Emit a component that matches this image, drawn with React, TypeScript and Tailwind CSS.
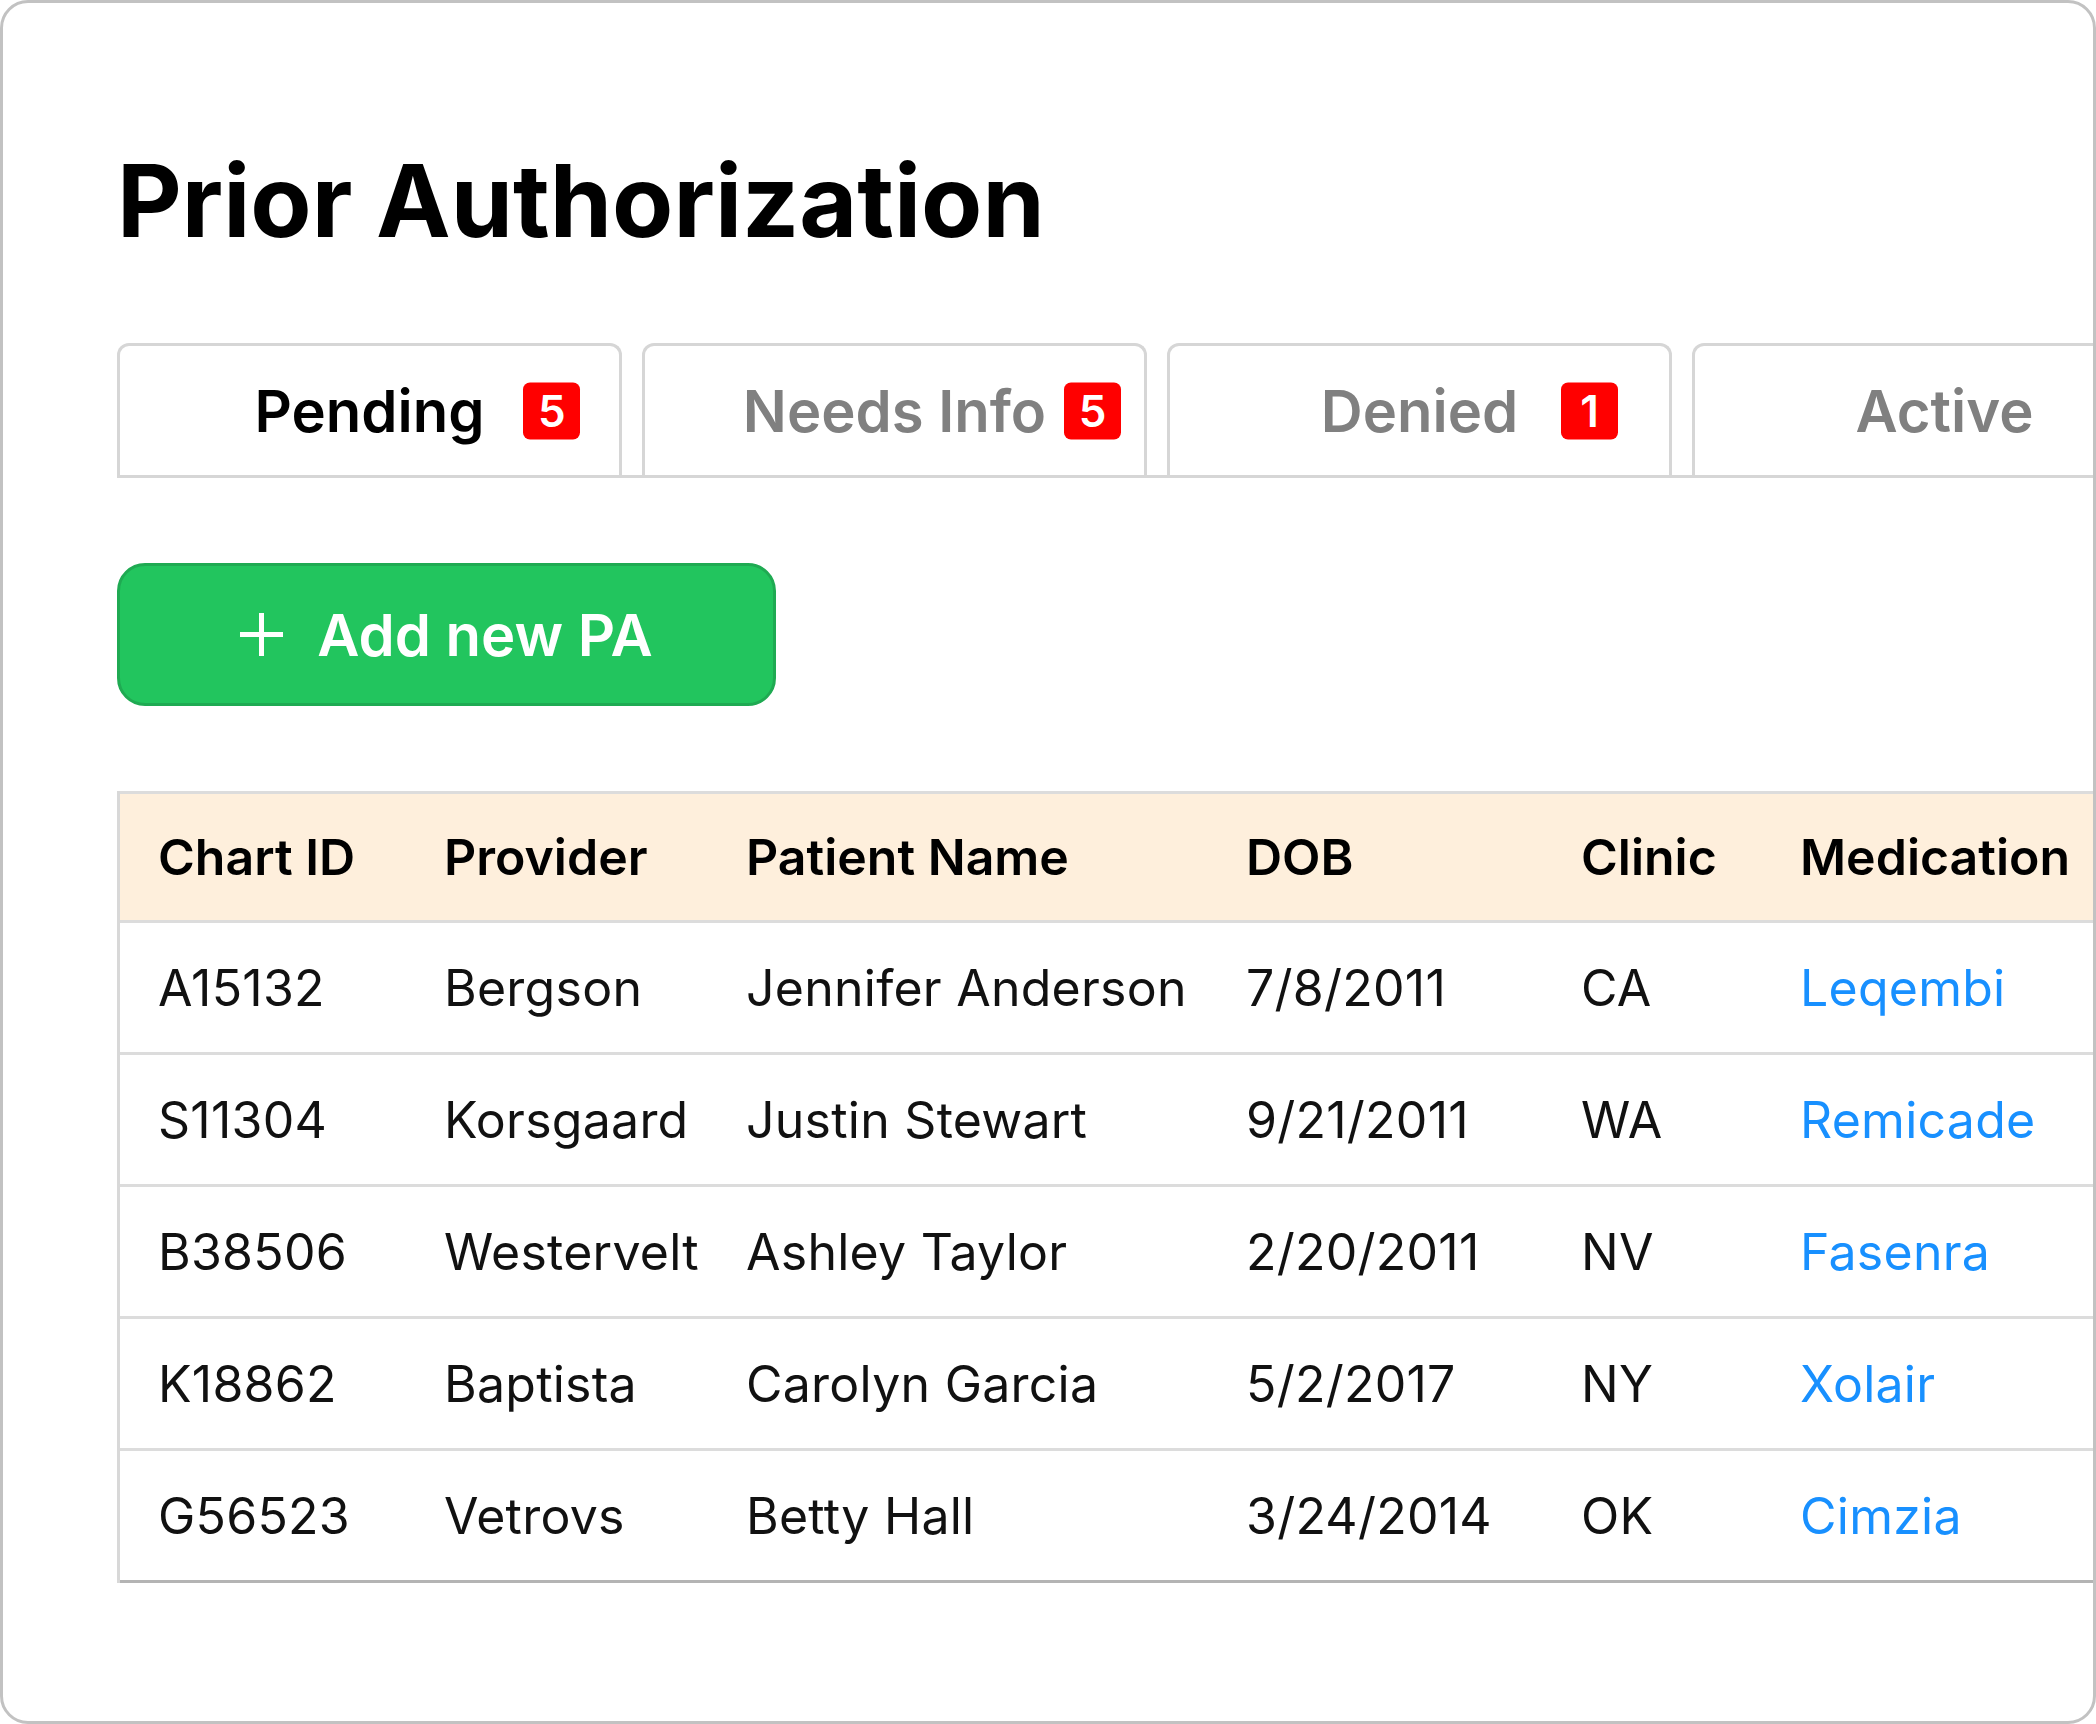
import React from "react";

const tabs = [
  { label: "Pending", count: "5", active: true, gap: "ml-[39px]" },
  { label: "Needs Info", count: "5", active: false, gap: "ml-[18px]" },
  { label: "Denied", count: "1", active: false, gap: "ml-[43px]" },
  { label: "Active", count: null as string | null, active: false, gap: "" },
];

const rows = [
  ["A15132", "Bergson", "Jennifer Anderson", "7/8/2011", "CA", "Leqembi"],
  ["S11304", "Korsgaard", "Justin Stewart", "9/21/2011", "WA", "Remicade"],
  ["B38506", "Westervelt", "Ashley Taylor", "2/20/2011", "NV", "Fasenra"],
  ["K18862", "Baptista", "Carolyn Garcia", "5/2/2017", "NY", "Xolair"],
  ["G56523", "Vetrovs", "Betty Hall", "3/24/2014", "OK", "Cimzia"],
];

const headers = ["Chart ID", "Provider", "Patient Name", "DOB", "Clinic", "Medication"];

const grid =
  "grid grid-cols-[286px_302px_500px_335px_219px_1fr] items-center";

export default function App() {
  return (
    <div
      className="w-[2096px] h-[1724px] bg-white"
      style={{ fontFamily: "Inter, 'Noto Sans', sans-serif" }}
    >
      <div className="box-border w-full h-full rounded-[28px] border-[3px] border-[#c2c2c2] overflow-hidden pl-[114px] flex flex-col">
        <h1 className="mt-[148px] text-[100px] leading-[100px] font-bold text-black">
          Prior Authorization
        </h1>

        <div className="mt-[92px] flex gap-[20px] border-b-[3px] border-[#d6d6d6]">
          {tabs.map((t) => (
            <div
              key={t.label}
              className="shrink-0 box-border w-[505px] h-[132px] border-[3px] border-b-0 border-[#d6d6d6] rounded-t-[12px] flex items-center justify-center"
            >
              <span
                className={`relative text-[58px] leading-none font-semibold ${
                  t.active ? "text-black" : "text-[#808080]"
                }`}
              >
                {t.label}
                {t.count && (
                  <span
                    className={`absolute left-full top-1/2 -translate-y-1/2 ${t.gap} w-[57px] h-[57px] rounded-[7px] bg-[#ff0000] text-white text-[44px] leading-none font-semibold flex items-center justify-center`}
                  >
                    {t.count}
                  </span>
                )}
              </span>
            </div>
          ))}
        </div>

        <button className="mt-[85px] box-border w-[659px] h-[143px] rounded-[28px] border-[3px] border-[#1faa52] bg-[#22c55e] flex items-center justify-center gap-[34px] text-white">
          <svg width="43" height="43" viewBox="0 0 43 43" className="shrink-0">
            <path d="M21.5 0 V43 M0 21.5 H43" stroke="white" strokeWidth="5" fill="none" />
          </svg>
          <span className="text-[58px] leading-none font-semibold">Add new PA</span>
        </button>

        <div className="mt-[85px] border-l-[3px] border-[#d8d8d8]">
          <div
            className={`${grid} box-border h-[132px] border-t-[3px] border-b-[3px] border-[#dcdcdc] bg-[#feefdc]`}
          >
            {headers.map((h) => (
              <div key={h} className="pl-[38px] text-[50px] leading-none font-semibold text-black whitespace-nowrap">
                {h}
              </div>
            ))}
          </div>
          {rows.map((r, i) => (
            <div
              key={r[0]}
              className={`${grid} box-border h-[132px] border-b-[3px] ${
                i === rows.length - 1 ? "border-[#b4b4b4]" : "border-[#dcdcdc]"
              }`}
            >
              {r.map((c, j) => (
                <div
                  key={j}
                  className={`pl-[38px] text-[50px] leading-none whitespace-nowrap tracking-[0.005em] ${
                    j === 5 ? "text-[#1890ff]" : "text-[#111111]"
                  }`}
                >
                  {c}
                </div>
              ))}
            </div>
          ))}
        </div>
      </div>
    </div>
  );
}
